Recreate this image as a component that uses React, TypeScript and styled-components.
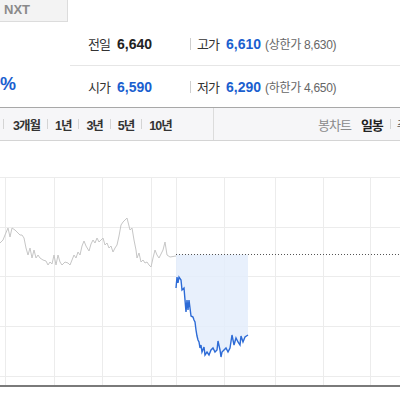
import styled, { createGlobalStyle } from "styled-components"

const GlobalStyle = createGlobalStyle`
    html, body {
        margin: 0;
        padding: 0;
        background: #fff;
        overflow: hidden;
    }
    body {
        font-family: "Liberation Sans", "Noto Sans CJK KR", sans-serif;
        color: #333;
    }
`

const gray = [
    [0, 243], [3, 240], [5, 235], [8, 228], [10, 237], [12, 228], [15, 230], [17, 232], [20, 235],
    [22, 235], [24, 238], [26, 248], [28, 255], [30, 248], [32, 258], [34, 250], [36, 258], [38, 255],
    [40, 258], [43, 260], [46, 261], [48, 265], [50, 262], [52, 264], [54, 255], [56, 265], [58, 255],
    [60, 262], [62, 265], [65, 262], [68, 263], [70, 265], [72, 260], [74, 255], [76, 258], [78, 252],
    [80, 255], [82, 246], [84, 241], [86, 246], [89, 251], [91, 244], [93, 240], [95, 243], [97, 238],
    [99, 242], [101, 240], [103, 238], [105, 245], [107, 243], [109, 248], [111, 246], [113, 252],
    [115, 248], [117, 245], [119, 236], [121, 225], [123, 222], [125, 220], [127, 218], [128, 222],
    [130, 230], [132, 228], [134, 240], [136, 250], [137, 258], [139, 253], [141, 262], [143, 260],
    [145, 263], [147, 262], [149, 265], [151, 267], [153, 258], [155, 250], [157, 255], [159, 258],
    [161, 254], [163, 250], [165, 242], [167, 255], [170, 257], [176, 256],
]

const blue = [
    [176, 288], [177, 277], [178, 283], [179, 277], [181, 280], [182, 290], [184, 288], [186, 312],
    [187, 300], [188, 310], [189, 300], [191, 316], [193, 317], [194, 320], [195, 322], [196, 330],
    [197, 336], [198, 340], [199, 342], [200, 348], [201, 345], [202, 352], [204, 347], [205, 355],
    [207, 352], [209, 355], [211, 350], [213, 348], [215, 352], [217, 350], [218, 341], [220, 350],
    [221, 357], [222, 352], [224, 350], [226, 348], [228, 352], [230, 348], [232, 335], [234, 345],
    [236, 338], [238, 342], [240, 345], [241, 336], [243, 342], [245, 337], [248, 335],
]

const toPath = (pts: number[][]) => pts.map(([x, y], i) => `${i ? "L" : "M"}${x} ${y}`).join(" ")

const hLines = [177, 227, 276, 326, 376]
const vLines = [5, 54, 102, 151, 176, 224, 275, 323, 370]

const periods = ["3개월", "1년", "3년", "5년", "10년"]

export default function App() {
    return (
        <Page>
            <GlobalStyle />
            <TabBar>
                <Tab>NXT</Tab>
            </TabBar>
            <Info>
                <RateCol>
                    <Rate>%</Rate>
                </RateCol>
                <Rows>
                    <InfoRow>
                        <Item $wide>
                            <Label>전일</Label>
                            <Value>6,640</Value>
                        </Item>
                        <Item>
                            <Divider />
                            <Label>고가</Label>
                            <Value $blue>6,610</Value>
                            <Limit>(상한가 8,630)</Limit>
                        </Item>
                    </InfoRow>
                    <InfoRow $last>
                        <Item $wide>
                            <Label>시가</Label>
                            <Value $blue>6,590</Value>
                        </Item>
                        <Item>
                            <Divider />
                            <Label>저가</Label>
                            <Value $blue>6,290</Value>
                            <Limit>(하한가 4,650)</Limit>
                        </Item>
                    </InfoRow>
                </Rows>
            </Info>
            <Toolbar>
                <Periods>
                    {periods.map((p) => (
                        <Period key={p}>{p}</Period>
                    ))}
                </Periods>
                <ChartTypes>
                    <TypeLabel>봉차트</TypeLabel>
                    <TypeItem $active>일봉</TypeItem>
                    <TypeItem $sep>주봉</TypeItem>
                </ChartTypes>
            </Toolbar>
            <Chart viewBox="0 141 400 259" width="400" height="259">
                {hLines.map((y) => (
                    <line key={"h" + y} x1="0" x2="400" y1={y + 0.5} y2={y + 0.5} stroke="#ececec" />
                ))}
                {vLines.map((x) => (
                    <line key={"v" + x} x1={x + 0.5} x2={x + 0.5} y1="177" y2="385" stroke="#ececec" />
                ))}
                <path d={`M176 254.5 ${toPath(blue).replace("M", "L")} L248 254.5 Z`} fill="#e4edfb" opacity="0.85" />
                <line x1="176" x2="400" y1="254.5" y2="254.5" stroke="#555" strokeDasharray="1 2" />
                <path d={toPath(gray)} fill="none" stroke="#c6c6c6" strokeWidth="1" />
                <path d={toPath(blue)} fill="none" stroke="#2d6bd6" strokeWidth="1.4" />
                <line x1="0" x2="400" y1="386" y2="386" stroke="#7a7a7a" strokeWidth="2" />
            </Chart>
        </Page>
    )
}

const Page = styled.div`
    width: 400px;
    height: 400px;
    overflow: hidden;
    display: flex;
    flex-direction: column;
`

const TabBar = styled.div`
    display: flex;
    height: 23px;
`

const Tab = styled.div`
    width: 68px;
    height: 22px;
    box-sizing: border-box;
    background: #f3f3f3;
    border: 1px solid #dcdcdc;
    border-top: none;
    border-left: none;
    padding: 2px 0 0 4px;
    font-size: 13px;
    font-weight: 700;
    color: #8a8a8a;
`

const Info = styled.div`
    display: flex;
    height: 86px;
    border-bottom: 1px solid #a8a8a8;
`

const RateCol = styled.div`
    width: 70px;
    display: flex;
    align-items: flex-end;
    padding-bottom: 12px;
    box-sizing: border-box;
`

const Rate = styled.span`
    font-size: 18px;
    font-weight: 700;
    color: #1b5fcf;
`

const Rows = styled.div`
    flex: 1;
    display: flex;
    flex-direction: column;
`

const InfoRow = styled.div<{ $last?: boolean }>`
    flex: 1;
    display: flex;
    align-items: center;
    padding-left: 18px;
    border-bottom: ${(p) => (p.$last ? "none" : "1px solid #e6e6e6")};
`

const Item = styled.div<{ $wide?: boolean }>`
    display: flex;
    align-items: center;
    width: ${(p) => (p.$wide ? "102px" : "auto")};
`

const Divider = styled.span`
    width: 1px;
    height: 12px;
    background: #cfcfcf;
    margin-right: 6px;
`

const Label = styled.span`
    width: 29px;
    font-size: 13px;
    color: #333;
    letter-spacing: -1px;
`

const Value = styled.span<{ $blue?: boolean }>`
    font-size: 14px;
    font-weight: 700;
    color: ${(p) => (p.$blue ? "#1b5fcf" : "#222")};
    margin-right: 4px;
`

const Limit = styled.span`
    font-size: 12px;
    color: #666;
    letter-spacing: -0.3px;
`

const Toolbar = styled.div`
    display: flex;
    height: 32px;
    background: #f6f6f8;
    border-bottom: 1px solid #d4d4d4;
`

const Periods = styled.div`
    width: 210px;
    flex-shrink: 0;
    display: flex;
    align-items: center;
    border-right: 1px solid #dcdcdc;
    padding-left: 3px;
`

const Period = styled.span`
    display: flex;
    align-items: center;
    font-size: 12.5px;
    font-weight: 700;
    color: #333;
    letter-spacing: -1px;
    &::before {
        content: "";
        width: 1px;
        height: 10px;
        background: #d4d4d4;
        margin: 0 7px 0 0;
    }
    & + &::before {
        margin-left: 7px;
    }
    &:first-child::before {
        margin-right: 9px;
    }
`

const ChartTypes = styled.div`
    flex: 1;
    min-width: 0;
    overflow: hidden;
    display: flex;
    align-items: center;
    padding-left: 104px;
    white-space: nowrap;
`

const TypeLabel = styled.span`
    font-size: 13px;
    color: #8a8a8a;
    margin-right: 10px;
    letter-spacing: -1px;
`

const TypeItem = styled.span<{ $active?: boolean; $sep?: boolean }>`
    display: flex;
    align-items: center;
    flex-shrink: 0;
    font-size: 13px;
    font-weight: ${(p) => (p.$active ? 700 : 400)};
    color: ${(p) => (p.$active ? "#222" : "#555")};
    letter-spacing: -1px;
    &::before {
        content: "";
        display: ${(p) => (p.$sep ? "block" : "none")};
        width: 1px;
        height: 10px;
        background: #d4d4d4;
        margin: 0 6px 0 7px;
    }
`

const Chart = styled.svg`
    display: block;
    flex-shrink: 0;
`
